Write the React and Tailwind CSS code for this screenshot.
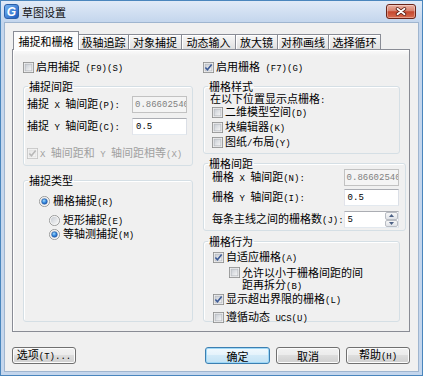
import React from "react";

const CJK_RE = /([\u2E80-\u9FFF\u3000-\u303F\uFF00-\uFFEF]+)/;

function T({ s, dim = false }) {
  const parts = s.split(CJK_RE).filter((p) => p !== "");
  return (
    <span className={dim ? "text-[#a0a0a0] whitespace-pre leading-[12px]" : "whitespace-pre leading-[12px]"}>
      {parts.map((p, i) =>
        CJK_RE.test(p) ? (
          <span key={i} className="font-['Noto_Sans_CJK_SC',sans-serif] text-[11px] leading-[12px]">
            {p}
          </span>
        ) : (
          <span key={i} className="font-['Liberation_Mono',monospace] text-[9px] leading-[12px]">
            {p}
          </span>
        )
      )}
    </span>
  );
}

function CB({ checked = false, disabled = false }) {
  return (
    <svg width="11" height="11" viewBox="0 0 13 13" className="shrink-0 block">
      <defs>
        <linearGradient id="cbin" x1="0" y1="0" x2="1" y2="1">
          <stop offset="0" stopColor="#c6cbd2" />
          <stop offset="1" stopColor="#f8f8f8" />
        </linearGradient>
        <linearGradient id="cbdis" x1="0" y1="0" x2="1" y2="1">
          <stop offset="0" stopColor="#e4e4e4" />
          <stop offset="1" stopColor="#f8f8f8" />
        </linearGradient>
      </defs>
      <rect x="0.5" y="0.5" width="12" height="12" fill="#f6f6f6" stroke={disabled ? "#c4c4c4" : "#8e8f8f"} />
      <rect x="2.5" y="2.5" width="8" height="8" fill={disabled ? "url(#cbdis)" : "url(#cbin)"} stroke={disabled ? "#e0e0e0" : "#b4b8be"} />
      {checked && (
        <path d="M2.8 6.4 L5.3 9.2 L10.2 3" fill="none" stroke={disabled ? "#b8b8b8" : "#3c5a96"} strokeWidth="1.9" />
      )}
    </svg>
  );
}

function RB({ on = false }) {
  return (
    <svg width="11" height="11" viewBox="0 0 13 13" className="shrink-0 block">
      <defs>
        <linearGradient id="rbin" x1="0" y1="0" x2="1" y2="1">
          <stop offset="0" stopColor="#c6cbd2" />
          <stop offset="1" stopColor="#f8f8f8" />
        </linearGradient>
        <radialGradient id="rbdot" cx="0.4" cy="0.35" r="0.7">
          <stop offset="0" stopColor="#a6dcfb" />
          <stop offset="0.5" stopColor="#3c8ee0" />
          <stop offset="1" stopColor="#1a56b0" />
        </radialGradient>
      </defs>
      <circle cx="6.5" cy="6.5" r="6" fill="#f6f6f6" stroke="#8e8f8f" />
      <circle cx="6.5" cy="6.5" r="4.3" fill="url(#rbin)" />
      {on && <circle cx="6.5" cy="6.5" r="3.3" fill="url(#rbdot)" stroke="#1d4f97" strokeWidth="0.6" />}
    </svg>
  );
}

function Inp({ v, disabled = false, spin = false }) {
  return (
    <div
      className={
        disabled
          ? "w-[55px] h-[17px] shrink-0 border border-[#c2c2c2] bg-[#f4f4f4] text-[#808080] flex items-center overflow-hidden pl-[2px]"
          : "w-[55px] h-[17px] shrink-0 border border-[#abadb3] border-b-[#e3e9ef] border-l-[#e2e3ea] border-r-[#dbdfe6] bg-white text-black flex items-center overflow-hidden pl-[3px]"
      }
    >
      <span className="flex-1 min-w-0 font-['Liberation_Mono',monospace] text-[9px] whitespace-nowrap leading-[12px]">{v}</span>
      {spin && (
        <div className="w-[13px] h-full flex flex-col shrink-0">
          <div className="flex-1 flex items-center justify-center border border-[#b9bdc4] rounded-[2px] bg-gradient-to-b from-[#f7f7f7] to-[#e0e3e8]">
            <svg width="5" height="3" viewBox="0 0 5 3" className="block">
              <path d="M0 3 L2.5 0 L5 3Z" fill="#4d6185" />
            </svg>
          </div>
          <div className="flex-1 flex items-center justify-center border border-[#b9bdc4] rounded-[2px] bg-gradient-to-b from-[#f7f7f7] to-[#e0e3e8]">
            <svg width="5" height="3" viewBox="0 0 5 3" className="block">
              <path d="M0 0 L2.5 3 L5 0Z" fill="#4d6185" />
            </svg>
          </div>
        </div>
      )}
    </div>
  );
}

function Group({ title, className, legendClass, children }) {
  return (
    <fieldset className={"border border-[#d5dfe5] rounded-[3px] shadow-[inset_1px_1px_0_#ffffff] " + className}>
      <legend className={"ml-[4px] px-[1px] " + legendClass}>
        <T s={title} />
      </legend>
      {children}
    </fieldset>
  );
}

function Btn({ label, className }) {
  return (
    <div className={"h-[17px] rounded-[3px] border flex items-center justify-center leading-[12px] " + className}>
      <T s={label} />
    </div>
  );
}

const tabs = [
  ["极轴追踪", "w-[50px]"],
  ["对象捕捉", "w-[53px]"],
  ["动态输入", "w-[54px]"],
  ["放大镜", "w-[42px]"],
  ["对称画线", "w-[51px]"],
  ["选择循环", "w-[52px]"],
];

export default function App() {
  return (
    <div className="w-[423px] h-[376px] flex flex-col bg-[#c4d6ed] border border-[#4a86bd] overflow-hidden text-[11px] leading-[12px] text-black font-['Noto_Sans_CJK_SC',sans-serif]">
      {/* title bar */}
      <div className="h-[21px] shrink-0 flex items-center pl-[3px] pr-[6px] bg-gradient-to-b from-[#e0eaf7] to-[#c4d6ed]">
        <div className="w-[15px] h-[15px] rounded-[3px] bg-gradient-to-br from-[#79b6f2] to-[#1a58bd] border border-[#2a5fa8] flex items-center justify-center">
          <span className="font-['Liberation_Sans',sans-serif] font-bold italic text-[12px] leading-none text-white">G</span>
        </div>
        <span className="ml-[3px] text-[11px] leading-[14px] font-['Noto_Sans_CJK_SC',sans-serif] text-[#111]">草图设置</span>
        <div className="ml-auto w-[30px] h-[15px] rounded-[3px] border border-[#6b2418] bg-[linear-gradient(#eab0a2,#d8836f_45%,#c4472e_52%,#d86d51)] shadow-[inset_0_0_0_1px_rgba(255,255,255,0.35)] flex items-center justify-center">
          <svg width="12" height="9" viewBox="0 0 12 9" className="block">
            <path d="M2.5 1.8 L9.5 7.2 M9.5 1.8 L2.5 7.2" stroke="#5a1e14" strokeWidth="3.4" strokeLinecap="round" />
            <path d="M2.5 1.8 L9.5 7.2 M9.5 1.8 L2.5 7.2" stroke="#ffffff" strokeWidth="1.8" strokeLinecap="round" />
          </svg>
        </div>
      </div>

      {/* client */}
      <div className="flex-1 mx-[3px] mb-[3px] bg-[#f0f0f0] border border-[#9fb5cf]">
        <div className="pt-[8px] pl-[7px]">
          {/* tabs */}
          <div className="flex items-end h-[18px] pl-[1px]">
            <div className="relative z-10 -mb-px w-[66px] h-[19px] border-l border-t border-r border-[#898c95] bg-[#fcfcfc] flex items-center justify-center pb-[1px]">
              <T s="捕捉和栅格" />
            </div>
            {tabs.map(([t, w]) => (
              <div
                key={t}
                className={"h-[15px] border-t border-r border-[#898c95] bg-gradient-to-b from-[#f7f7f7] to-[#e1e1e1] shadow-[inset_1px_1px_0_#ffffff] flex items-center justify-center " + w}
              >
                <T s={t} />
              </div>
            ))}
          </div>

          {/* panel */}
          <div className="w-[398px] h-[283px] border border-[#898c95] bg-[linear-gradient(#fbfbfb,#f0f0f0_6px)] shadow-[inset_1px_1px_0_#ffffff] flex pl-[10px] pt-[10px] gap-[10px]">
            {/* left column */}
            <div className="w-[170px] flex flex-col">
              <div className="h-[14px] flex items-center gap-[2px]">
                <CB />
                <T s="启用捕捉 (F9)(S)" />
              </div>
              <Group title="捕捉间距" className="mt-[5px] h-[87px]" legendClass="h-[14px] leading-[14px]">
                <div className="pl-[3px] pr-[5px]">
                  <div className="mt-[3px] h-[17px] flex items-center justify-between">
                    <T s="捕捉 X 轴间距(P):" />
                    <Inp v="0.86602540" disabled />
                  </div>
                  <div className="mt-[5px] h-[17px] flex items-center justify-between">
                    <T s="捕捉 Y 轴间距(C):" />
                    <Inp v="0.5" />
                  </div>
                  <div className="mt-[11px] h-[14px] flex items-center gap-[2px]">
                    <CB checked disabled />
                    <T s="X 轴间距和 Y 轴间距相等(X)" dim />
                  </div>
                </div>
              </Group>
              <Group title="捕捉类型" className="mt-[7px] h-[149px]" legendClass="h-[14px] leading-[14px]">
                <div className="pl-[15px]">
                  <div className="mt-[7px] h-[14px] flex items-center gap-[3px]">
                    <RB on />
                    <T s="栅格捕捉(R)" />
                  </div>
                  <div className="mt-[5px] ml-[10px] h-[14px] flex items-center gap-[3px]">
                    <RB />
                    <T s="矩形捕捉(E)" />
                  </div>
                  <div className="ml-[10px] h-[14px] flex items-center gap-[3px]">
                    <RB on />
                    <T s="等轴测捕捉(M)" />
                  </div>
                </div>
              </Group>
            </div>

            {/* right column */}
            <div className="w-[197px] flex flex-col">
              <div className="h-[14px] flex items-center gap-[2px]">
                <CB checked />
                <T s="启用栅格 (F7)(G)" />
              </div>
              <Group title="栅格样式" className="mt-[5px] h-[75px]" legendClass="h-[14px] leading-[14px]">
                <div className="pl-[6px]">
                  <div className="h-[12px] flex items-center">
                    <T s="在以下位置显示点栅格:" />
                  </div>
                  <div className="pl-[2px] h-[15px] flex items-center gap-[2px]">
                    <CB />
                    <T s="二维模型空间(D)" />
                  </div>
                  <div className="pl-[2px] h-[15px] flex items-center gap-[2px]">
                    <CB />
                    <T s="块编辑器(K)" />
                  </div>
                  <div className="pl-[2px] h-[15px] flex items-center gap-[2px]">
                    <CB />
                    <T s="图纸/布局(Y)" />
                  </div>
                </div>
              </Group>
              <Group title="栅格间距" className="mt-[3px] h-[74px]" legendClass="h-[12px] leading-[12px]">
                <div className="pl-[8px] pr-[6px]">
                  <div className="h-[17px] flex items-center justify-between">
                    <T s="栅格 X 轴间距(N):" />
                    <Inp v="0.86602540" disabled />
                  </div>
                  <div className="mt-[3px] h-[17px] flex items-center justify-between">
                    <T s="栅格 Y 轴间距(I):" />
                    <Inp v="0.5" />
                  </div>
                  <div className="mt-[5px] h-[17px] flex items-center justify-between">
                    <T s="每条主线之间的栅格数(J):" />
                    <Inp v="5" spin />
                  </div>
                </div>
              </Group>
              <Group title="栅格行为" className="mt-[4px] h-[87px]" legendClass="h-[12px] leading-[12px]">
                <div className="pl-[9px]">
                  <div className="mt-[3px] h-[14px] flex items-center gap-[2px]">
                    <CB checked />
                    <T s="自适应栅格(A)" />
                  </div>
                  <div className="mt-[2px] pl-[16px] flex items-start gap-[2px]">
                    <div className="mt-[1px]">
                      <CB />
                    </div>
                    <div className="leading-[12px] flex flex-col">
                      <T s="允许以小于栅格间距的间" />
                      <T s="距再拆分(B)" />
                    </div>
                  </div>
                  <div className="h-[13px] flex items-center gap-[2px]">
                    <CB checked />
                    <T s="显示超出界限的栅格(L)" />
                  </div>
                  <div className="mt-[4px] h-[14px] flex items-center gap-[2px]">
                    <CB />
                    <T s="遵循动态 UCS(U)" />
                  </div>
                </div>
              </Group>
            </div>
          </div>

          {/* buttons */}
          <div className="w-[398px] mt-[15px] flex items-center">
            <Btn
              label="选项(T)..."
              className="w-[64px] border-[#707070] bg-[linear-gradient(#f2f2f2,#ebebeb_50%,#dddddd_50%,#cfcfcf)] shadow-[inset_0_0_0_1px_#fcfcfc]"
            />
            <div className="ml-auto flex gap-[6px]">
              <Btn
                label="确定"
                className="w-[65px] border-[#3c7fb1] bg-[linear-gradient(#f1f9fe,#e3f2fb_50%,#d2eaf8_50%,#c3e2f4)] shadow-[inset_0_0_0_1px_#9fd8f7]"
              />
              <Btn
                label="取消"
                className="w-[64px] border-[#707070] bg-[linear-gradient(#f2f2f2,#ebebeb_50%,#dddddd_50%,#cfcfcf)] shadow-[inset_0_0_0_1px_#fcfcfc]"
              />
              <Btn
                label="帮助(H)"
                className="w-[64px] border-[#707070] bg-[linear-gradient(#f2f2f2,#ebebeb_50%,#dddddd_50%,#cfcfcf)] shadow-[inset_0_0_0_1px_#fcfcfc]"
              />
            </div>
          </div>
        </div>
      </div>
    </div>
  );
}
